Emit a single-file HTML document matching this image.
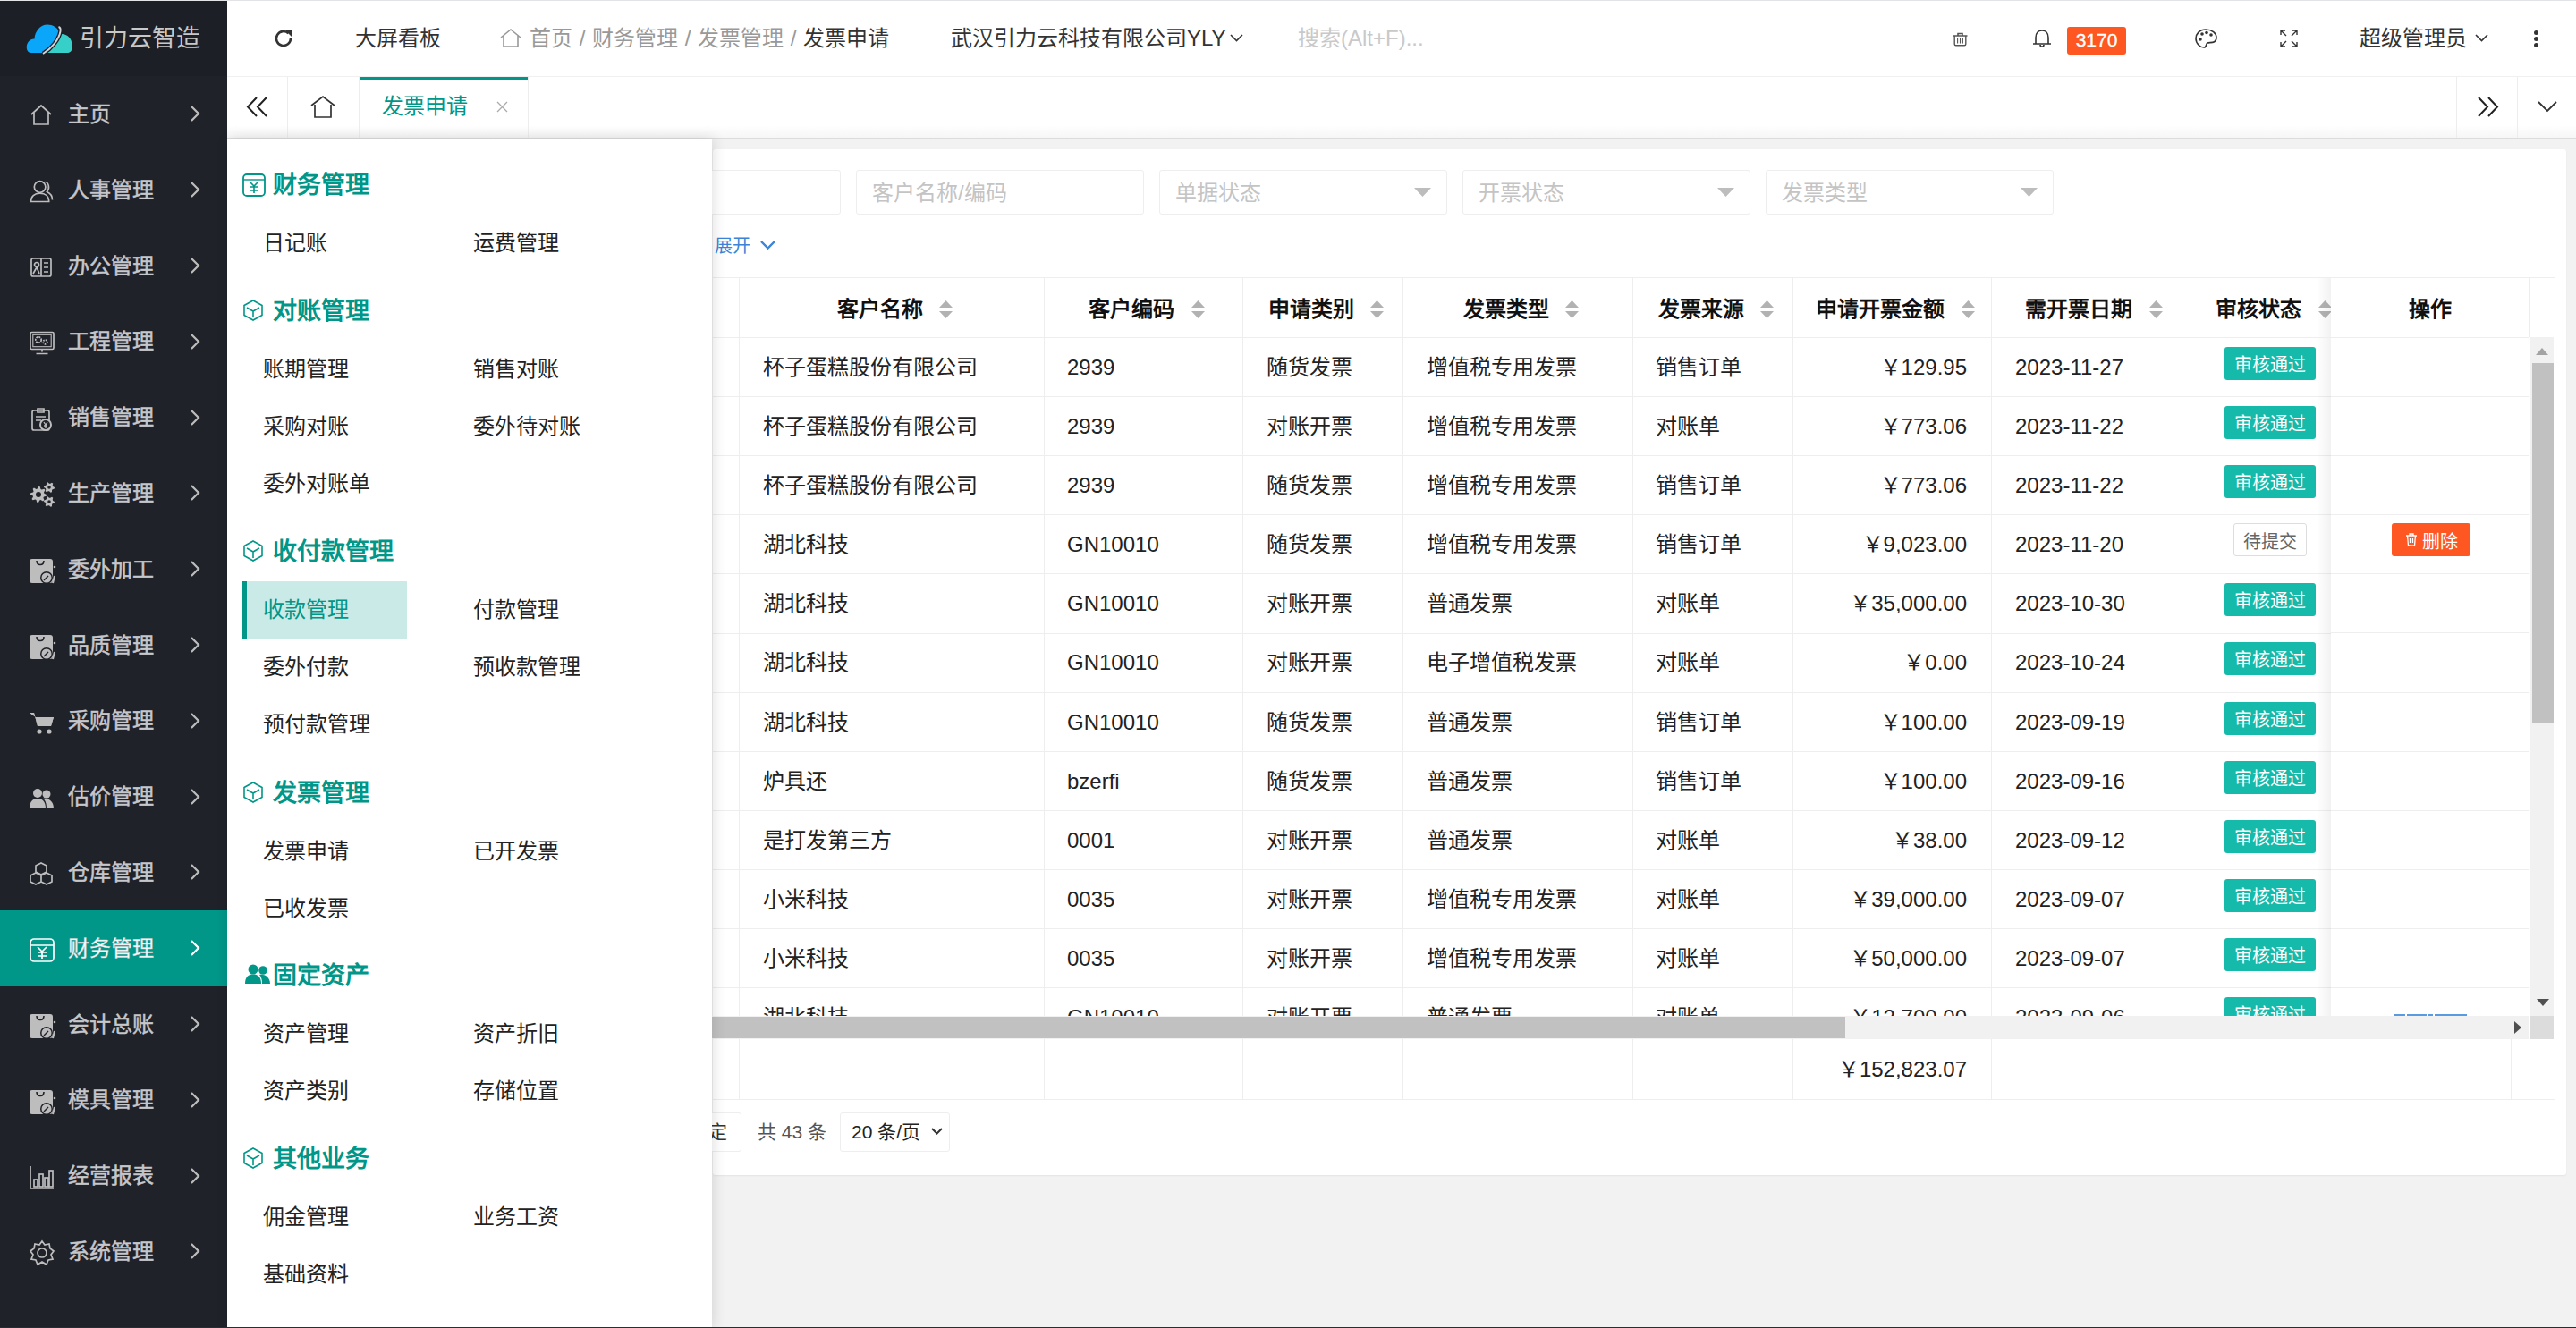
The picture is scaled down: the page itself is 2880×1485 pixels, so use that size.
<!DOCTYPE html><html lang="zh-CN"><head><meta charset="utf-8"><style>
*{margin:0;padding:0;box-sizing:border-box}
html,body{width:2880px;height:1485px;overflow:hidden;background:#f2f2f2;font-family:"Liberation Sans",sans-serif;color:#333}
.a{position:absolute}
.t{position:absolute;white-space:nowrap;line-height:1}
svg{position:absolute;overflow:visible}
#side{position:absolute;left:0;top:1px;width:254px;height:1484px;background:#20222a}
.mi{position:absolute;left:0;width:254px}
.mi .tx{position:absolute;left:76px;top:1px;font-size:24px;color:#c6c7cb;-webkit-text-stroke:0.5px #c6c7cb;white-space:nowrap}
.mi.on{background:#009688}
.mi.on .tx{color:#fff}
</style></head><body>
<div class="a" style="left:0;top:0;width:2880px;height:1px;background:#e2e3e6"></div>
<div id="side">
<div class="a" style="left:0;top:0;width:254px;height:84px;background:#1d1f26"></div>
<svg style="left:29px;top:25px" width="54" height="36" viewBox="0 0 54 36">
<path d="M6 33 C2 33 0.5 29.5 0.8 26 C1.2 21 5 17 9.5 17.5 C10 9 16 1.6 24 1.6 C30 1.6 35 5 37 9 C33 19 27 28 20 33 Z" fill="#0aa6fa"/>
<path d="M23 33 C30 28 35 20 39 12 C46 11.5 51.5 17 51.5 24 L51.5 28 C51.5 31 49 33 46 33 Z" fill="#36d0c9"/>
<path d="M19 34 C29 28 37 18 38.5 9 C39 6 38 4.5 36.5 4" stroke="#1d1f26" stroke-width="4.6" fill="none"/>
<path d="M19 34 C29 28 37 18 38.5 9 C39 6 38 4.5 36.5 4" stroke="#d3d4d8" stroke-width="1.9" fill="none"/></svg>
<div class="t" style="left:89px;top:29px;font-size:27px;color:#c8c8c8">引力云智造</div>
</div>
<div class="mi" style="top:85.0px;height:84.8px">
<div class="tx" style="line-height:84.8px">主页</div>
<svg style="left:33px;top:30.4px" width="28" height="28" viewBox="0 0 28 28"><path d="M2 13 L13 3 L24 13 M5 11 V24 H21 V11" stroke="#bdbdbd" fill="none" stroke-width="1.7"/></svg>
<svg style="left:212px;top:33.4px" width="12" height="18" viewBox="0 0 12 18"><path d="M2 1 L10 9 L2 17" stroke="#bdbdbd" stroke-width="2.2" fill="none"/></svg>
</div>
<div class="mi" style="top:169.8px;height:84.8px">
<div class="tx" style="line-height:84.8px">人事管理</div>
<svg style="left:33px;top:30.4px" width="28" height="28" viewBox="0 0 28 28"><circle cx="11.6" cy="9" r="6.3" stroke="#bdbdbd" fill="none" stroke-width="1.7"/><path d="M1.5 25.5 C1.5 19.5 5.5 16.2 11.6 16.2 C17.7 16.2 21.7 19.5 21.7 25.5 Z" stroke="#bdbdbd" fill="none" stroke-width="1.7"/><path d="M17.5 3.5 C21.5 4 23 10.5 19.5 14.5 C23 16 25.5 19.5 25.5 23.5" stroke="#bdbdbd" fill="none" stroke-width="1.7"/></svg>
<svg style="left:212px;top:33.4px" width="12" height="18" viewBox="0 0 12 18"><path d="M2 1 L10 9 L2 17" stroke="#bdbdbd" stroke-width="2.2" fill="none"/></svg>
</div>
<div class="mi" style="top:254.6px;height:84.8px">
<div class="tx" style="line-height:84.8px">办公管理</div>
<svg style="left:33px;top:30.4px" width="28" height="28" viewBox="0 0 28 28"><rect x="2" y="4" width="22" height="20" rx="2" stroke="#bdbdbd" fill="none" stroke-width="1.7"/><path d="M13 4 V24 M16 9 H21 M16 14 H21 M16 19 H21" stroke="#bdbdbd" fill="none" stroke-width="1.7"/><circle cx="8" cy="11" r="2.5" stroke="#bdbdbd" fill="none" stroke-width="1.7"/><path d="M4 21 L8 14 L11 21" stroke="#bdbdbd" fill="none" stroke-width="1.7"/></svg>
<svg style="left:212px;top:33.4px" width="12" height="18" viewBox="0 0 12 18"><path d="M2 1 L10 9 L2 17" stroke="#bdbdbd" stroke-width="2.2" fill="none"/></svg>
</div>
<div class="mi" style="top:339.4px;height:84.8px">
<div class="tx" style="line-height:84.8px">工程管理</div>
<svg style="left:33px;top:30.4px" width="28" height="28" viewBox="0 0 28 28"><rect x="1" y="1.5" width="26" height="19" rx="1.5" stroke="#bdbdbd" fill="none" stroke-width="1.7"/><rect x="3.8" y="4.3" width="20.4" height="13.4" stroke="#bdbdbd" fill="none" stroke-width="1.1"/><circle cx="10" cy="10" r="3.2" stroke="#bdbdbd" fill="none" stroke-width="1.7" stroke-dasharray="2 1"/><circle cx="17.5" cy="12.5" r="2.3" stroke="#bdbdbd" fill="none" stroke-width="1.7" stroke-dasharray="1.5 1"/><path d="M14 20.5 V23.5 M7.5 25.5 H20.5" stroke="#bdbdbd" fill="none" stroke-width="1.7"/></svg>
<svg style="left:212px;top:33.4px" width="12" height="18" viewBox="0 0 12 18"><path d="M2 1 L10 9 L2 17" stroke="#bdbdbd" stroke-width="2.2" fill="none"/></svg>
</div>
<div class="mi" style="top:424.2px;height:84.8px">
<div class="tx" style="line-height:84.8px">销售管理</div>
<svg style="left:33px;top:30.4px" width="28" height="28" viewBox="0 0 28 28"><rect x="3" y="4" width="19" height="22" rx="2" stroke="#bdbdbd" fill="none" stroke-width="1.7"/><path d="M9 2 H16 V6 H9 Z M7 11 H18 M7 15 H13" stroke="#bdbdbd" fill="none" stroke-width="1.7"/><circle cx="18" cy="20" r="6" fill="#20222a" stroke="#bdbdbd" fill="none" s stroke-width="2"/><path d="M16 17 L18 20 L20 17 M18 20 V24 M16 21 H20" stroke="#bdbdbd" fill="none" stroke-width="1.3"/></svg>
<svg style="left:212px;top:33.4px" width="12" height="18" viewBox="0 0 12 18"><path d="M2 1 L10 9 L2 17" stroke="#bdbdbd" stroke-width="2.2" fill="none"/></svg>
</div>
<div class="mi" style="top:509.0px;height:84.8px">
<div class="tx" style="line-height:84.8px">生产管理</div>
<svg style="left:33px;top:30.4px" width="28" height="28" viewBox="0 0 28 28"><path d="M19.00 14.00 L18.83 15.76 L16.01 16.49 L15.40 17.61 L16.36 20.36 L15.00 21.48 L12.49 20.01 L11.27 20.38 L10.00 23.00 L8.24 22.83 L7.51 20.01 L6.39 19.40 L3.64 20.36 L2.52 19.00 L3.99 16.49 L3.62 15.27 L1.00 14.00 L1.17 12.24 L3.99 11.51 L4.60 10.39 L3.64 7.64 L5.00 6.52 L7.51 7.99 L8.73 7.62 L10.00 5.00 L11.76 5.17 L12.49 7.99 L13.61 8.60 L16.36 7.64 L17.48 9.00 L16.01 11.51 L16.38 12.73 Z" fill="#bdbdbd"/><circle cx="10" cy="14" r="3" fill="#20222a"/><path d="M28.00 6.00 L27.80 7.55 L25.72 8.15 L25.04 9.04 L25.00 11.20 L23.55 11.80 L22.00 10.30 L20.89 10.15 L19.00 11.20 L17.76 10.24 L18.28 8.15 L17.85 7.11 L16.00 6.00 L16.20 4.45 L18.28 3.85 L18.96 2.96 L19.00 0.80 L20.45 0.20 L22.00 1.70 L23.11 1.85 L25.00 0.80 L26.24 1.76 L25.72 3.85 L26.15 4.89 Z" fill="#bdbdbd"/><circle cx="22" cy="6" r="1.8" fill="#20222a"/><path d="M28.00 22.00 L27.80 23.55 L25.72 24.15 L25.04 25.04 L25.00 27.20 L23.55 27.80 L22.00 26.30 L20.89 26.15 L19.00 27.20 L17.76 26.24 L18.28 24.15 L17.85 23.11 L16.00 22.00 L16.20 20.45 L18.28 19.85 L18.96 18.96 L19.00 16.80 L20.45 16.20 L22.00 17.70 L23.11 17.85 L25.00 16.80 L26.24 17.76 L25.72 19.85 L26.15 20.89 Z" fill="#bdbdbd"/><circle cx="22" cy="22" r="1.8" fill="#20222a"/></svg>
<svg style="left:212px;top:33.4px" width="12" height="18" viewBox="0 0 12 18"><path d="M2 1 L10 9 L2 17" stroke="#bdbdbd" stroke-width="2.2" fill="none"/></svg>
</div>
<div class="mi" style="top:593.8px;height:84.8px">
<div class="tx" style="line-height:84.8px">委外加工</div>
<svg style="left:33px;top:30.4px" width="28" height="28" viewBox="0 0 28 28"><rect x="0" y="1" width="26" height="27" rx="3" fill="#bdbdbd"/><path d="M8 3 C8 9 16 9 16 3" stroke="#20222a" stroke-width="1.6" fill="none"/><circle cx="19" cy="22" r="7" fill="#20222a"/><circle cx="19" cy="22" r="5.5" fill="#bdbdbd"/><path d="M16 25 L21 20" stroke="#20222a" stroke-width="1.5"/><circle cx="28" cy="10" r="1.3" fill="#bdbdbd"/><path d="M28 20 L26 28" stroke="#bdbdbd" stroke-width="2"/></svg>
<svg style="left:212px;top:33.4px" width="12" height="18" viewBox="0 0 12 18"><path d="M2 1 L10 9 L2 17" stroke="#bdbdbd" stroke-width="2.2" fill="none"/></svg>
</div>
<div class="mi" style="top:678.6px;height:84.8px">
<div class="tx" style="line-height:84.8px">品质管理</div>
<svg style="left:33px;top:30.4px" width="28" height="28" viewBox="0 0 28 28"><rect x="0" y="1" width="26" height="27" rx="3" fill="#bdbdbd"/><path d="M8 3 C8 9 16 9 16 3" stroke="#20222a" stroke-width="1.6" fill="none"/><circle cx="19" cy="22" r="7" fill="#20222a"/><circle cx="19" cy="22" r="5.5" fill="#bdbdbd"/><path d="M16 25 L21 20" stroke="#20222a" stroke-width="1.5"/><circle cx="28" cy="10" r="1.3" fill="#bdbdbd"/><path d="M28 20 L26 28" stroke="#bdbdbd" stroke-width="2"/></svg>
<svg style="left:212px;top:33.4px" width="12" height="18" viewBox="0 0 12 18"><path d="M2 1 L10 9 L2 17" stroke="#bdbdbd" stroke-width="2.2" fill="none"/></svg>
</div>
<div class="mi" style="top:763.4px;height:84.8px">
<div class="tx" style="line-height:84.8px">采购管理</div>
<svg style="left:33px;top:30.4px" width="28" height="28" viewBox="0 0 28 28"><path d="M0 3 H5 L9 18 H24 L27 8 H7" fill="#bdbdbd"/><path d="M0 3 H5 L9 18 H24 L27 8 H7 Z" fill="#bdbdbd"/><circle cx="11" cy="24" r="2.6" fill="#bdbdbd"/><circle cx="22" cy="24" r="2.6" fill="#bdbdbd"/></svg>
<svg style="left:212px;top:33.4px" width="12" height="18" viewBox="0 0 12 18"><path d="M2 1 L10 9 L2 17" stroke="#bdbdbd" stroke-width="2.2" fill="none"/></svg>
</div>
<div class="mi" style="top:848.2px;height:84.8px">
<div class="tx" style="line-height:84.8px">估价管理</div>
<svg style="left:33px;top:30.4px" width="28" height="28" viewBox="0 0 28 28"><circle cx="9" cy="8" r="5" fill="#bdbdbd"/><path d="M0 25 C0 17 4 14 9 14 C14 14 18 17 18 25 Z" fill="#bdbdbd"/><circle cx="19" cy="9" r="4.5" fill="#bdbdbd"/><path d="M15 14 C20 13 27 16 27 25 H19 C19 20 18 16 15 14 Z" fill="#bdbdbd"/></svg>
<svg style="left:212px;top:33.4px" width="12" height="18" viewBox="0 0 12 18"><path d="M2 1 L10 9 L2 17" stroke="#bdbdbd" stroke-width="2.2" fill="none"/></svg>
</div>
<div class="mi" style="top:933.0px;height:84.8px">
<div class="tx" style="line-height:84.8px">仓库管理</div>
<svg style="left:33px;top:30.4px" width="28" height="28" viewBox="0 0 28 28"><path d="M13 2 L19 5 V12 L13 15 L7 12 V5 Z M7 13 L13 16 V23 L7 26 L1 23 V16 Z M19 13 L25 16 V23 L19 26 L13 23 V16 Z" stroke="#bdbdbd" fill="none" stroke-width="1.7" stroke-width="1.8"/></svg>
<svg style="left:212px;top:33.4px" width="12" height="18" viewBox="0 0 12 18"><path d="M2 1 L10 9 L2 17" stroke="#bdbdbd" stroke-width="2.2" fill="none"/></svg>
</div>
<div class="mi on" style="top:1017.8px;height:84.8px">
<div class="tx" style="line-height:84.8px">财务管理</div>
<svg style="left:33px;top:30.4px" width="28" height="28" viewBox="0 0 28 28"><rect x="1" y="2" width="26" height="25" rx="4" stroke="#ffffff" fill="none" stroke-width="1.7"/><path d="M1 9 H27" stroke="#ffffff" stroke-width="1.5"/><path d="M9 11 L14 16 L19 11 M14 16 V24 M9 17 H19 M9 21 H19" stroke="#ffffff" fill="none" stroke-width="1.7" stroke-width="1.8"/></svg>
<svg style="left:212px;top:33.4px" width="12" height="18" viewBox="0 0 12 18"><path d="M2 1 L10 9 L2 17" stroke="#ffffff" stroke-width="2.2" fill="none"/></svg>
</div>
<div class="mi" style="top:1102.6px;height:84.8px">
<div class="tx" style="line-height:84.8px">会计总账</div>
<svg style="left:33px;top:30.4px" width="28" height="28" viewBox="0 0 28 28"><rect x="0" y="1" width="26" height="27" rx="3" fill="#bdbdbd"/><path d="M8 3 C8 9 16 9 16 3" stroke="#20222a" stroke-width="1.6" fill="none"/><circle cx="19" cy="22" r="7" fill="#20222a"/><circle cx="19" cy="22" r="5.5" fill="#bdbdbd"/><path d="M16 25 L21 20" stroke="#20222a" stroke-width="1.5"/><circle cx="28" cy="10" r="1.3" fill="#bdbdbd"/><path d="M28 20 L26 28" stroke="#bdbdbd" stroke-width="2"/></svg>
<svg style="left:212px;top:33.4px" width="12" height="18" viewBox="0 0 12 18"><path d="M2 1 L10 9 L2 17" stroke="#bdbdbd" stroke-width="2.2" fill="none"/></svg>
</div>
<div class="mi" style="top:1187.4px;height:84.8px">
<div class="tx" style="line-height:84.8px">模具管理</div>
<svg style="left:33px;top:30.4px" width="28" height="28" viewBox="0 0 28 28"><rect x="0" y="1" width="26" height="27" rx="3" fill="#bdbdbd"/><path d="M8 3 C8 9 16 9 16 3" stroke="#20222a" stroke-width="1.6" fill="none"/><circle cx="19" cy="22" r="7" fill="#20222a"/><circle cx="19" cy="22" r="5.5" fill="#bdbdbd"/><path d="M16 25 L21 20" stroke="#20222a" stroke-width="1.5"/><circle cx="28" cy="10" r="1.3" fill="#bdbdbd"/><path d="M28 20 L26 28" stroke="#bdbdbd" stroke-width="2"/></svg>
<svg style="left:212px;top:33.4px" width="12" height="18" viewBox="0 0 12 18"><path d="M2 1 L10 9 L2 17" stroke="#bdbdbd" stroke-width="2.2" fill="none"/></svg>
</div>
<div class="mi" style="top:1272.2px;height:84.8px">
<div class="tx" style="line-height:84.8px">经营报表</div>
<svg style="left:33px;top:30.4px" width="28" height="28" viewBox="0 0 28 28"><path d="M1 1 V26 H27" stroke="#bdbdbd" fill="none" stroke-width="1.7"/><rect x="5" y="16" width="4" height="8" stroke="#bdbdbd" fill="none" stroke-width="1.7" stroke-width="1.5"/><rect x="11" y="10" width="4" height="14" stroke="#bdbdbd" fill="none" stroke-width="1.7" stroke-width="1.5"/><rect x="17" y="14" width="4" height="10" stroke="#bdbdbd" fill="none" stroke-width="1.7" stroke-width="1.5"/><rect x="22" y="6" width="4" height="18" stroke="#bdbdbd" fill="none" stroke-width="1.7" stroke-width="1.5"/></svg>
<svg style="left:212px;top:33.4px" width="12" height="18" viewBox="0 0 12 18"><path d="M2 1 L10 9 L2 17" stroke="#bdbdbd" stroke-width="2.2" fill="none"/></svg>
</div>
<div class="mi" style="top:1357.0px;height:84.8px">
<div class="tx" style="line-height:84.8px">系统管理</div>
<svg style="left:33px;top:30.4px" width="28" height="28" viewBox="0 0 28 28"><circle cx="14" cy="14" r="5" stroke="#bdbdbd" fill="none" stroke-width="1.7"/><path d="M14 1 L17 5 L22 4 L23 9 L27 12 L24 16 L26 21 L21 22 L19 27 L14 24 L9 27 L7 22 L2 21 L4 16 L1 12 L5 9 L6 4 L11 5 Z" stroke="#bdbdbd" fill="none" stroke-width="1.7" stroke-width="1.8"/></svg>
<svg style="left:212px;top:33.4px" width="12" height="18" viewBox="0 0 12 18"><path d="M2 1 L10 9 L2 17" stroke="#bdbdbd" stroke-width="2.2" fill="none"/></svg>
</div>
<div class="a" style="left:254px;top:1px;width:2626px;height:85px;background:#fff;border-bottom:1px solid #f0f0f0"></div>
<svg style="left:306px;top:32px" width="22" height="22" viewBox="0 0 22 22"><path d="M19 11 A8 8 0 1 1 16.5 5.2" stroke="#333" stroke-width="2.6" fill="none"/><path d="M13 2 L20 2 L20 9 Z" fill="#333"/></svg>
<div class="t" style="left:397px;top:31px;font-size:24px;color:#333">大屏看板</div>
<svg style="left:559px;top:31px" width="24" height="22" viewBox="0 0 24 22"><path d="M1 11 L12 2 L23 11 M4 9 V21 H20 V9" stroke="#999" stroke-width="1.6" fill="none"/></svg>
<div class="t" style="left:592px;top:31px;font-size:24px;color:#999">首页<span style="margin:0 1px"> / </span>财务管理<span style="margin:0 1px"> / </span>发票管理<span style="margin:0 1px"> / </span><span style="color:#333">发票申请</span></div>
<div class="t" style="left:1063px;top:31px;font-size:24px;color:#333">武汉引力云科技有限公司YLY</div>
<svg style="left:1375px;top:38px" width="15" height="9" viewBox="0 0 15 9"><path d="M1 1 L7.5 7.5 L14 1" stroke="#333" stroke-width="1.6" fill="none"/></svg>
<div class="t" style="left:1451px;top:31px;font-size:24px;color:#c9c9c9">搜索(Alt+F)...</div>
<svg style="left:2182px;top:34px" width="19" height="18" viewBox="0 0 19 18"><path d="M1.5 6 H17.5 M7 6 V3.5 H12 V6" stroke="#555" stroke-width="1.6" fill="none"/><path d="M3.2 6 V15.3 C3.2 16.3 3.7 16.8 4.7 16.8 H14.3 C15.3 16.8 15.8 16.3 15.8 15.3 V6" stroke="#555" stroke-width="1.4" fill="none"/><path d="M6.6 8.5 V14.5 M9.5 8.5 V14.5 M12.4 8.5 V14.5" stroke="#555" stroke-width="1.1" fill="none"/></svg>
<svg style="left:2272px;top:32px" width="22" height="22" viewBox="0 0 22 22"><path d="M4 17 V10 C4 5 7 2 11 2 C15 2 18 5 18 10 V17 H21 H1 Z M9 18 C9 21 13 21 13 18" stroke="#333" stroke-width="1.6" fill="none"/></svg>
<div class="a" style="left:2311px;top:30px;width:66px;height:31px;background:#ff5722;border-radius:3px"></div>
<div class="t" style="left:2311px;top:34px;width:66px;text-align:center;font-size:21px;color:#fff;-webkit-text-stroke:0.3px #fff">3170</div>
<svg style="left:2454px;top:32px" width="25" height="22" viewBox="0 0 25 22"><path d="M12 1 C5 1 1 6 1 11 C1 17 6 21 10 21 C13 21 12 17 14 16 C17 15 24 17 24 10 C24 5 19 1 12 1 Z" stroke="#333" stroke-width="1.6" fill="none"/><circle cx="6" cy="12" r="1.8" fill="#333"/><circle cx="8" cy="6" r="1.8" fill="#333"/><circle cx="13" cy="4.5" r="1.8" fill="#333"/><circle cx="18" cy="7" r="1.8" fill="#333"/></svg>
<svg style="left:2549px;top:33px" width="20" height="20" viewBox="0 0 20 20"><path d="M1 6 V1 H6 M1 1 L7 7 M14 1 H19 V6 M19 1 L13 7 M1 14 V19 H6 M1 19 L7 13 M19 14 V19 H14 M19 19 L13 13" stroke="#333" stroke-width="1.4" fill="none"/></svg>
<div class="t" style="left:2638px;top:31px;font-size:24px;color:#333">超级管理员</div>
<svg style="left:2767px;top:38px" width="15" height="9" viewBox="0 0 15 9"><path d="M1 1 L7.5 7.5 L14 1" stroke="#333" stroke-width="1.6" fill="none"/></svg>
<div class="a" style="left:2833px;top:34px;width:5px;height:5px;border-radius:50%;background:#333"></div><div class="a" style="left:2833px;top:41px;width:5px;height:5px;border-radius:50%;background:#333"></div><div class="a" style="left:2833px;top:48px;width:5px;height:5px;border-radius:50%;background:#333"></div>
<div class="a" style="left:254px;top:86px;width:2626px;height:69px;background:linear-gradient(#fff 0,#fff 54px,#f6f6f6 68px);border-bottom:1px solid #dcdcdc"></div>
<div class="a" style="left:321px;top:86px;width:1px;height:68px;background:#ededed"></div>
<div class="a" style="left:401px;top:86px;width:1px;height:68px;background:#ededed"></div>
<div class="a" style="left:590px;top:86px;width:1px;height:68px;background:#ededed"></div>
<svg style="left:276px;top:108px" width="23" height="23" viewBox="0 0 23 23"><path d="M11 1 L1 11.5 L11 22 M22 1 L12 11.5 L22 22" stroke="#222" stroke-width="2" fill="none"/></svg>
<svg style="left:347px;top:107px" width="28" height="25" viewBox="0 0 28 25"><path d="M1 11 L14 1 L27 11 M5 10 V24 H23 V10" stroke="#333" stroke-width="1.7" fill="none"/></svg>
<div class="a" style="left:402px;top:86px;width:188px;height:3px;background:#009688"></div>
<div class="t" style="left:427px;top:107px;font-size:24px;color:#009688">发票申请</div>
<svg style="left:555px;top:113px" width="13" height="13" viewBox="0 0 13 13"><path d="M1 1 L12 12 M12 1 L1 12" stroke="#aaa" stroke-width="1.3" fill="none"/></svg>
<div class="a" style="left:2746px;top:86px;width:1px;height:68px;background:#ededed"></div>
<div class="a" style="left:2814px;top:86px;width:1px;height:68px;background:#ededed"></div>
<svg style="left:2770px;top:108px" width="23" height="23" viewBox="0 0 23 23"><path d="M1 1 L11 11.5 L1 22 M12 1 L22 11.5 L12 22" stroke="#222" stroke-width="2" fill="none"/></svg>
<svg style="left:2837px;top:113px" width="22" height="13" viewBox="0 0 22 13"><path d="M1 1 L11 11 L21 1" stroke="#333" stroke-width="1.8" fill="none"/></svg>
<div class="a" style="left:797px;top:167px;width:2072px;height:1147px;background:#fff;border-radius:3px;box-shadow:0 1px 2px rgba(0,0,0,0.06)"></div>
<div class="a" style="left:618px;top:190px;width:322px;height:50px;border:1px solid #eee;border-radius:3px;background:#fff"></div>
<div class="a" style="left:957px;top:190px;width:322px;height:50px;border:1px solid #eee;border-radius:3px;background:#fff"></div>
<div class="t" style="left:975px;top:204px;font-size:24px;color:#c4c4c4">客户名称/编码</div>
<div class="a" style="left:1296px;top:190px;width:322px;height:50px;border:1px solid #eee;border-radius:3px;background:#fff"></div>
<div class="t" style="left:1314px;top:204px;font-size:24px;color:#c4c4c4">单据状态</div>
<svg style="left:1581px;top:210px" width="19" height="10" viewBox="0 0 19 10"><path d="M0 0 H19 L9.5 10 Z" fill="#bdbdbd"/></svg>
<div class="a" style="left:1635px;top:190px;width:322px;height:50px;border:1px solid #eee;border-radius:3px;background:#fff"></div>
<div class="t" style="left:1653px;top:204px;font-size:24px;color:#c4c4c4">开票状态</div>
<svg style="left:1920px;top:210px" width="19" height="10" viewBox="0 0 19 10"><path d="M0 0 H19 L9.5 10 Z" fill="#bdbdbd"/></svg>
<div class="a" style="left:1974px;top:190px;width:322px;height:50px;border:1px solid #eee;border-radius:3px;background:#fff"></div>
<div class="t" style="left:1992px;top:204px;font-size:24px;color:#c4c4c4">发票类型</div>
<svg style="left:2259px;top:210px" width="19" height="10" viewBox="0 0 19 10"><path d="M0 0 H19 L9.5 10 Z" fill="#bdbdbd"/></svg>
<div class="t" style="left:799px;top:265px;font-size:20px;color:#3b84d8">展开</div>
<svg style="left:850px;top:269px" width="17" height="10" viewBox="0 0 17 10"><path d="M1 1 L8.5 8.5 L16 1" stroke="#3b84d8" stroke-width="2.4" fill="none"/></svg>
<div class="a" style="left:600px;top:310px;width:2257px;height:1px;background:#eeeeee"></div>
<div class="a" style="left:2856px;top:310px;width:1px;height:991px;background:#eeeeee"></div>
<div class="a" style="left:600px;top:1300px;width:2257px;height:1px;background:#eeeeee"></div>
<div class="a" style="left:826px;top:310px;width:1px;height:826px;background:#eeeeee"></div>
<div class="a" style="left:1167px;top:310px;width:1px;height:826px;background:#eeeeee"></div>
<div class="a" style="left:1389px;top:310px;width:1px;height:826px;background:#eeeeee"></div>
<div class="a" style="left:1568px;top:310px;width:1px;height:826px;background:#eeeeee"></div>
<div class="a" style="left:1825px;top:310px;width:1px;height:826px;background:#eeeeee"></div>
<div class="a" style="left:2004px;top:310px;width:1px;height:826px;background:#eeeeee"></div>
<div class="a" style="left:2226px;top:310px;width:1px;height:826px;background:#eeeeee"></div>
<div class="a" style="left:2448px;top:310px;width:1px;height:826px;background:#eeeeee"></div>
<div class="a" style="left:600px;top:377px;width:2228px;height:1px;background:#eeeeee"></div>
<div class="a" style="left:600px;top:443px;width:2228px;height:1px;background:#eeeeee"></div>
<div class="a" style="left:600px;top:509px;width:2228px;height:1px;background:#eeeeee"></div>
<div class="a" style="left:600px;top:575px;width:2228px;height:1px;background:#eeeeee"></div>
<div class="a" style="left:600px;top:641px;width:2228px;height:1px;background:#eeeeee"></div>
<div class="a" style="left:600px;top:708px;width:2228px;height:1px;background:#eeeeee"></div>
<div class="a" style="left:600px;top:774px;width:2228px;height:1px;background:#eeeeee"></div>
<div class="a" style="left:600px;top:840px;width:2228px;height:1px;background:#eeeeee"></div>
<div class="a" style="left:600px;top:906px;width:2228px;height:1px;background:#eeeeee"></div>
<div class="a" style="left:600px;top:972px;width:2228px;height:1px;background:#eeeeee"></div>
<div class="a" style="left:600px;top:1038px;width:2228px;height:1px;background:#eeeeee"></div>
<div class="a" style="left:600px;top:1104px;width:2228px;height:1px;background:#eeeeee"></div>
<div class="t" style="left:936px;top:334px;font-size:24px;font-weight:bold;color:#111">客户名称</div>
<svg style="left:1050px;top:336px" width="15" height="20" viewBox="0 0 15 20"><path d="M0 8 L7.5 0 L15 8 Z M0 12 L7.5 20 L15 12 Z" fill="#b2b2b2"/></svg>
<div class="t" style="left:1217px;top:334px;font-size:24px;font-weight:bold;color:#111">客户编码</div>
<svg style="left:1332px;top:336px" width="15" height="20" viewBox="0 0 15 20"><path d="M0 8 L7.5 0 L15 8 Z M0 12 L7.5 20 L15 12 Z" fill="#b2b2b2"/></svg>
<div class="t" style="left:1418px;top:334px;font-size:24px;font-weight:bold;color:#111">申请类别</div>
<svg style="left:1532px;top:336px" width="15" height="20" viewBox="0 0 15 20"><path d="M0 8 L7.5 0 L15 8 Z M0 12 L7.5 20 L15 12 Z" fill="#b2b2b2"/></svg>
<div class="t" style="left:1636px;top:334px;font-size:24px;font-weight:bold;color:#111">发票类型</div>
<svg style="left:1750px;top:336px" width="15" height="20" viewBox="0 0 15 20"><path d="M0 8 L7.5 0 L15 8 Z M0 12 L7.5 20 L15 12 Z" fill="#b2b2b2"/></svg>
<div class="t" style="left:1854px;top:334px;font-size:24px;font-weight:bold;color:#111">发票来源</div>
<svg style="left:1968px;top:336px" width="15" height="20" viewBox="0 0 15 20"><path d="M0 8 L7.5 0 L15 8 Z M0 12 L7.5 20 L15 12 Z" fill="#b2b2b2"/></svg>
<div class="t" style="left:2030px;top:334px;font-size:24px;font-weight:bold;color:#111">申请开票金额</div>
<svg style="left:2193px;top:336px" width="15" height="20" viewBox="0 0 15 20"><path d="M0 8 L7.5 0 L15 8 Z M0 12 L7.5 20 L15 12 Z" fill="#b2b2b2"/></svg>
<div class="t" style="left:2264px;top:334px;font-size:24px;font-weight:bold;color:#111">需开票日期</div>
<svg style="left:2403px;top:336px" width="15" height="20" viewBox="0 0 15 20"><path d="M0 8 L7.5 0 L15 8 Z M0 12 L7.5 20 L15 12 Z" fill="#b2b2b2"/></svg>
<div class="t" style="left:2477px;top:334px;font-size:24px;font-weight:bold;color:#111">审核状态</div>
<svg style="left:2592px;top:336px" width="15" height="20" viewBox="0 0 15 20"><path d="M0 8 L7.5 0 L15 8 Z M0 12 L7.5 20 L15 12 Z" fill="#b2b2b2"/></svg>
<div class="a" style="left:0;top:378px;width:2880px;height:758px;overflow:hidden">
<div class="t" style="left:853px;top:21px;font-size:24px;color:#222">杯子蛋糕股份有限公司</div>
<div class="t" style="left:1193px;top:21px;font-size:24px;color:#222">2939</div>
<div class="t" style="left:1416px;top:21px;font-size:24px;color:#222">随货发票</div>
<div class="t" style="left:1595px;top:21px;font-size:24px;color:#222">增值税专用发票</div>
<div class="t" style="left:1851px;top:21px;font-size:24px;color:#222">销售订单</div>
<div class="t" style="left:1900px;width:299px;text-align:right;top:21px;font-size:24px;color:#222">￥129.95</div>
<div class="t" style="left:2253px;top:21px;font-size:24px;color:#222">2023-11-27</div>
<div class="a" style="left:2487px;top:10px;width:102px;height:37px;background:#16baaa;border-radius:3px"></div>
<div class="t" style="left:2498px;top:20px;font-size:20px;color:#fff">审核通过</div>
<div class="t" style="left:853px;top:87px;font-size:24px;color:#222">杯子蛋糕股份有限公司</div>
<div class="t" style="left:1193px;top:87px;font-size:24px;color:#222">2939</div>
<div class="t" style="left:1416px;top:87px;font-size:24px;color:#222">对账开票</div>
<div class="t" style="left:1595px;top:87px;font-size:24px;color:#222">增值税专用发票</div>
<div class="t" style="left:1851px;top:87px;font-size:24px;color:#222">对账单</div>
<div class="t" style="left:1900px;width:299px;text-align:right;top:87px;font-size:24px;color:#222">￥773.06</div>
<div class="t" style="left:2253px;top:87px;font-size:24px;color:#222">2023-11-22</div>
<div class="a" style="left:2487px;top:76px;width:102px;height:37px;background:#16baaa;border-radius:3px"></div>
<div class="t" style="left:2498px;top:86px;font-size:20px;color:#fff">审核通过</div>
<div class="t" style="left:853px;top:153px;font-size:24px;color:#222">杯子蛋糕股份有限公司</div>
<div class="t" style="left:1193px;top:153px;font-size:24px;color:#222">2939</div>
<div class="t" style="left:1416px;top:153px;font-size:24px;color:#222">随货发票</div>
<div class="t" style="left:1595px;top:153px;font-size:24px;color:#222">增值税专用发票</div>
<div class="t" style="left:1851px;top:153px;font-size:24px;color:#222">销售订单</div>
<div class="t" style="left:1900px;width:299px;text-align:right;top:153px;font-size:24px;color:#222">￥773.06</div>
<div class="t" style="left:2253px;top:153px;font-size:24px;color:#222">2023-11-22</div>
<div class="a" style="left:2487px;top:142px;width:102px;height:37px;background:#16baaa;border-radius:3px"></div>
<div class="t" style="left:2498px;top:152px;font-size:20px;color:#fff">审核通过</div>
<div class="t" style="left:853px;top:219px;font-size:24px;color:#222">湖北科技</div>
<div class="t" style="left:1193px;top:219px;font-size:24px;color:#222">GN10010</div>
<div class="t" style="left:1416px;top:219px;font-size:24px;color:#222">随货发票</div>
<div class="t" style="left:1595px;top:219px;font-size:24px;color:#222">增值税专用发票</div>
<div class="t" style="left:1851px;top:219px;font-size:24px;color:#222">销售订单</div>
<div class="t" style="left:1900px;width:299px;text-align:right;top:219px;font-size:24px;color:#222">￥9,023.00</div>
<div class="t" style="left:2253px;top:219px;font-size:24px;color:#222">2023-11-20</div>
<div class="a" style="left:2497px;top:207px;width:82px;height:37px;background:#fff;border:1px solid #ddd;border-radius:3px"></div>
<div class="t" style="left:2508px;top:218px;font-size:20px;color:#666">待提交</div>
<div class="t" style="left:853px;top:285px;font-size:24px;color:#222">湖北科技</div>
<div class="t" style="left:1193px;top:285px;font-size:24px;color:#222">GN10010</div>
<div class="t" style="left:1416px;top:285px;font-size:24px;color:#222">对账开票</div>
<div class="t" style="left:1595px;top:285px;font-size:24px;color:#222">普通发票</div>
<div class="t" style="left:1851px;top:285px;font-size:24px;color:#222">对账单</div>
<div class="t" style="left:1900px;width:299px;text-align:right;top:285px;font-size:24px;color:#222">￥35,000.00</div>
<div class="t" style="left:2253px;top:285px;font-size:24px;color:#222">2023-10-30</div>
<div class="a" style="left:2487px;top:274px;width:102px;height:37px;background:#16baaa;border-radius:3px"></div>
<div class="t" style="left:2498px;top:284px;font-size:20px;color:#fff">审核通过</div>
<div class="t" style="left:853px;top:351px;font-size:24px;color:#222">湖北科技</div>
<div class="t" style="left:1193px;top:351px;font-size:24px;color:#222">GN10010</div>
<div class="t" style="left:1416px;top:351px;font-size:24px;color:#222">对账开票</div>
<div class="t" style="left:1595px;top:351px;font-size:24px;color:#222">电子增值税发票</div>
<div class="t" style="left:1851px;top:351px;font-size:24px;color:#222">对账单</div>
<div class="t" style="left:1900px;width:299px;text-align:right;top:351px;font-size:24px;color:#222">￥0.00</div>
<div class="t" style="left:2253px;top:351px;font-size:24px;color:#222">2023-10-24</div>
<div class="a" style="left:2487px;top:340px;width:102px;height:37px;background:#16baaa;border-radius:3px"></div>
<div class="t" style="left:2498px;top:350px;font-size:20px;color:#fff">审核通过</div>
<div class="t" style="left:853px;top:418px;font-size:24px;color:#222">湖北科技</div>
<div class="t" style="left:1193px;top:418px;font-size:24px;color:#222">GN10010</div>
<div class="t" style="left:1416px;top:418px;font-size:24px;color:#222">随货发票</div>
<div class="t" style="left:1595px;top:418px;font-size:24px;color:#222">普通发票</div>
<div class="t" style="left:1851px;top:418px;font-size:24px;color:#222">销售订单</div>
<div class="t" style="left:1900px;width:299px;text-align:right;top:418px;font-size:24px;color:#222">￥100.00</div>
<div class="t" style="left:2253px;top:418px;font-size:24px;color:#222">2023-09-19</div>
<div class="a" style="left:2487px;top:407px;width:102px;height:37px;background:#16baaa;border-radius:3px"></div>
<div class="t" style="left:2498px;top:417px;font-size:20px;color:#fff">审核通过</div>
<div class="t" style="left:853px;top:484px;font-size:24px;color:#222">炉具还</div>
<div class="t" style="left:1193px;top:484px;font-size:24px;color:#222">bzerfi</div>
<div class="t" style="left:1416px;top:484px;font-size:24px;color:#222">随货发票</div>
<div class="t" style="left:1595px;top:484px;font-size:24px;color:#222">普通发票</div>
<div class="t" style="left:1851px;top:484px;font-size:24px;color:#222">销售订单</div>
<div class="t" style="left:1900px;width:299px;text-align:right;top:484px;font-size:24px;color:#222">￥100.00</div>
<div class="t" style="left:2253px;top:484px;font-size:24px;color:#222">2023-09-16</div>
<div class="a" style="left:2487px;top:473px;width:102px;height:37px;background:#16baaa;border-radius:3px"></div>
<div class="t" style="left:2498px;top:483px;font-size:20px;color:#fff">审核通过</div>
<div class="t" style="left:853px;top:550px;font-size:24px;color:#222">是打发第三方</div>
<div class="t" style="left:1193px;top:550px;font-size:24px;color:#222">0001</div>
<div class="t" style="left:1416px;top:550px;font-size:24px;color:#222">对账开票</div>
<div class="t" style="left:1595px;top:550px;font-size:24px;color:#222">普通发票</div>
<div class="t" style="left:1851px;top:550px;font-size:24px;color:#222">对账单</div>
<div class="t" style="left:1900px;width:299px;text-align:right;top:550px;font-size:24px;color:#222">￥38.00</div>
<div class="t" style="left:2253px;top:550px;font-size:24px;color:#222">2023-09-12</div>
<div class="a" style="left:2487px;top:539px;width:102px;height:37px;background:#16baaa;border-radius:3px"></div>
<div class="t" style="left:2498px;top:549px;font-size:20px;color:#fff">审核通过</div>
<div class="t" style="left:853px;top:616px;font-size:24px;color:#222">小米科技</div>
<div class="t" style="left:1193px;top:616px;font-size:24px;color:#222">0035</div>
<div class="t" style="left:1416px;top:616px;font-size:24px;color:#222">对账开票</div>
<div class="t" style="left:1595px;top:616px;font-size:24px;color:#222">增值税专用发票</div>
<div class="t" style="left:1851px;top:616px;font-size:24px;color:#222">对账单</div>
<div class="t" style="left:1900px;width:299px;text-align:right;top:616px;font-size:24px;color:#222">￥39,000.00</div>
<div class="t" style="left:2253px;top:616px;font-size:24px;color:#222">2023-09-07</div>
<div class="a" style="left:2487px;top:605px;width:102px;height:37px;background:#16baaa;border-radius:3px"></div>
<div class="t" style="left:2498px;top:615px;font-size:20px;color:#fff">审核通过</div>
<div class="t" style="left:853px;top:682px;font-size:24px;color:#222">小米科技</div>
<div class="t" style="left:1193px;top:682px;font-size:24px;color:#222">0035</div>
<div class="t" style="left:1416px;top:682px;font-size:24px;color:#222">对账开票</div>
<div class="t" style="left:1595px;top:682px;font-size:24px;color:#222">增值税专用发票</div>
<div class="t" style="left:1851px;top:682px;font-size:24px;color:#222">对账单</div>
<div class="t" style="left:1900px;width:299px;text-align:right;top:682px;font-size:24px;color:#222">￥50,000.00</div>
<div class="t" style="left:2253px;top:682px;font-size:24px;color:#222">2023-09-07</div>
<div class="a" style="left:2487px;top:671px;width:102px;height:37px;background:#16baaa;border-radius:3px"></div>
<div class="t" style="left:2498px;top:681px;font-size:20px;color:#fff">审核通过</div>
<div class="t" style="left:853px;top:748px;font-size:24px;color:#222">湖北科技</div>
<div class="t" style="left:1193px;top:748px;font-size:24px;color:#222">GN10010</div>
<div class="t" style="left:1416px;top:748px;font-size:24px;color:#222">对账开票</div>
<div class="t" style="left:1595px;top:748px;font-size:24px;color:#222">普通发票</div>
<div class="t" style="left:1851px;top:748px;font-size:24px;color:#222">对账单</div>
<div class="t" style="left:1900px;width:299px;text-align:right;top:748px;font-size:24px;color:#222">￥12,700.00</div>
<div class="t" style="left:2253px;top:748px;font-size:24px;color:#222">2023-09-06</div>
<div class="a" style="left:2487px;top:737px;width:102px;height:37px;background:#16baaa;border-radius:3px"></div>
<div class="t" style="left:2498px;top:747px;font-size:20px;color:#fff">审核通过</div>
<div class="a" style="left:2590px;top:0;width:16px;height:800px;background:linear-gradient(90deg,rgba(0,0,0,0),rgba(0,0,0,0.05))"></div>
<div class="a" style="left:2606px;top:0;width:222px;height:800px;background:#fff"></div>
<div class="a" style="left:2606px;top:65px;width:222px;height:1px;background:#eeeeee"></div>
<div class="a" style="left:2606px;top:131px;width:222px;height:1px;background:#eeeeee"></div>
<div class="a" style="left:2606px;top:197px;width:222px;height:1px;background:#eeeeee"></div>
<div class="a" style="left:2606px;top:263px;width:222px;height:1px;background:#eeeeee"></div>
<div class="a" style="left:2606px;top:329px;width:222px;height:1px;background:#eeeeee"></div>
<div class="a" style="left:2606px;top:396px;width:222px;height:1px;background:#eeeeee"></div>
<div class="a" style="left:2606px;top:462px;width:222px;height:1px;background:#eeeeee"></div>
<div class="a" style="left:2606px;top:528px;width:222px;height:1px;background:#eeeeee"></div>
<div class="a" style="left:2606px;top:594px;width:222px;height:1px;background:#eeeeee"></div>
<div class="a" style="left:2606px;top:660px;width:222px;height:1px;background:#eeeeee"></div>
<div class="a" style="left:2606px;top:726px;width:222px;height:1px;background:#eeeeee"></div>
<div class="a" style="left:2674px;top:207px;width:88px;height:37px;background:#ff5722;border-radius:3px"></div>
<svg style="left:2689px;top:218px" width="14" height="15" viewBox="0 0 14 15"><path d="M1 3 H13 M5 3 V1 H9 V3 M2.5 3 L3.5 14 H10.5 L11.5 3 M5.5 6 V11 M8.5 6 V11" stroke="#fff" stroke-width="1.3" fill="none"/></svg>
<div class="t" style="left:2708px;top:218px;font-size:20px;color:#fff">删除</div>
<div class="a" style="left:2677px;top:756px;width:12px;height:2px;background:#5a9ae0"></div>
<div class="a" style="left:2691px;top:756px;width:22px;height:2px;background:#5a9ae0"></div>
<div class="a" style="left:2715px;top:756px;width:5px;height:2px;background:#5a9ae0"></div>
<div class="a" style="left:2722px;top:756px;width:36px;height:2px;background:#5a9ae0"></div>
</div>
<div class="a" style="left:2590px;top:311px;width:16px;height:66px;background:linear-gradient(90deg,rgba(0,0,0,0),rgba(0,0,0,0.05))"></div>
<div class="a" style="left:2606px;top:311px;width:222px;height:67px;background:#fff;border-bottom:1px solid #eeeeee"></div>
<div class="a" style="left:2828px;top:310px;width:1px;height:67px;background:#eeeeee"></div>
<div class="t" style="left:2693px;top:334px;font-size:24px;font-weight:bold;color:#111">操作</div>
<div class="a" style="left:2829px;top:377px;width:26px;height:759px;background:#f1f1f1"></div>
<div class="a" style="left:2831px;top:406px;width:24px;height:402px;background:#c1c1c1"></div>
<svg style="left:2835px;top:389px" width="14" height="8" viewBox="0 0 14 8"><path d="M0 8 L7 0 L14 8 Z" fill="#a3a3a3"/></svg>
<svg style="left:2836px;top:1117px" width="14" height="8" viewBox="0 0 14 8"><path d="M0 0 L7 8 L14 0 Z" fill="#505050"/></svg>
<div class="a" style="left:600px;top:1136px;width:2228px;height:26px;background:#f1f1f1"></div>
<div class="a" style="left:600px;top:1137px;width:1463px;height:24px;background:#c1c1c1"></div>
<svg style="left:2811px;top:1142px" width="8" height="14" viewBox="0 0 8 14"><path d="M0 0 L8 7 L0 14 Z" fill="#505050"/></svg>
<div class="a" style="left:2829px;top:1136px;width:26px;height:26px;background:#dcdcdc"></div>
<div class="a" style="left:826px;top:1162px;width:1px;height:68px;background:#eeeeee"></div>
<div class="a" style="left:1167px;top:1162px;width:1px;height:68px;background:#eeeeee"></div>
<div class="a" style="left:1389px;top:1162px;width:1px;height:68px;background:#eeeeee"></div>
<div class="a" style="left:1568px;top:1162px;width:1px;height:68px;background:#eeeeee"></div>
<div class="a" style="left:1825px;top:1162px;width:1px;height:68px;background:#eeeeee"></div>
<div class="a" style="left:2004px;top:1162px;width:1px;height:68px;background:#eeeeee"></div>
<div class="a" style="left:2226px;top:1162px;width:1px;height:68px;background:#eeeeee"></div>
<div class="a" style="left:2448px;top:1162px;width:1px;height:68px;background:#eeeeee"></div>
<div class="a" style="left:2628px;top:1162px;width:1px;height:68px;background:#eeeeee"></div>
<div class="a" style="left:2807px;top:1162px;width:1px;height:68px;background:#eeeeee"></div>
<div class="a" style="left:600px;top:1229px;width:2257px;height:1px;background:#eeeeee"></div>
<div class="t" style="left:1900px;width:299px;text-align:right;top:1184px;font-size:24px;color:#222">￥152,823.07</div>
<div class="a" style="left:700px;top:1244px;width:129px;height:44px;border:1px solid #eee;border-radius:3px;background:#fff"></div>
<div class="t" style="left:771px;top:1255px;font-size:21px;color:#333">确定</div>
<div class="t" style="left:847px;top:1255px;font-size:21px;color:#555">共 43 条</div>
<div class="a" style="left:939px;top:1244px;width:123px;height:44px;border:1px solid #eee;border-radius:3px;background:#fff"></div>
<div class="t" style="left:952px;top:1255px;font-size:21px;color:#222">20 条/页</div>
<svg style="left:1041px;top:1261px" width="13" height="8" viewBox="0 0 13 8"><path d="M1 1 L6.5 6.5 L12 1" stroke="#333" stroke-width="2" fill="none"/></svg>
<div class="a" style="left:254px;top:155px;width:542px;height:1330px;background:#fff;box-shadow:2px 0 14px rgba(0,0,0,0.12)"></div>
<svg style="left:271px;top:193.7px" width="26" height="26" viewBox="0 0 26 26"><rect x="1" y="1" width="24" height="24" rx="4" stroke="#009688" stroke-width="1.8" fill="none"/><path d="M1 7 H25" stroke="#009688" stroke-width="1.4"/><path d="M8 9 L13 14 L18 9 M13 14 V22 M8 15 H18 M8 19 H18" stroke="#009688" stroke-width="1.6" fill="none"/></svg>
<div class="t" style="left:305px;top:193.7px;font-size:27px;font-weight:bold;color:#009688">财务管理</div>
<div class="t" style="left:294px;top:259.7px;font-size:24px;color:#222">日记账</div>
<div class="t" style="left:529px;top:259.7px;font-size:24px;color:#222">运费管理</div>
<svg style="left:271px;top:334.6px" width="26" height="26" viewBox="0 0 26 26"><path d="M12 1 L22 6.5 V17.5 L12 23 L2 17.5 V6.5 Z M5 9 L12 13 L19 9 M12 13 V20" stroke="#009688" stroke-width="1.6" fill="none"/></svg>
<div class="t" style="left:305px;top:334.6px;font-size:27px;font-weight:bold;color:#009688">对账管理</div>
<div class="t" style="left:294px;top:400.6px;font-size:24px;color:#222">账期管理</div>
<div class="t" style="left:529px;top:400.6px;font-size:24px;color:#222">销售对账</div>
<div class="t" style="left:294px;top:464.6px;font-size:24px;color:#222">采购对账</div>
<div class="t" style="left:529px;top:464.6px;font-size:24px;color:#222">委外待对账</div>
<div class="t" style="left:294px;top:528.6px;font-size:24px;color:#222">委外对账单</div>
<svg style="left:271px;top:603.5px" width="26" height="26" viewBox="0 0 26 26"><path d="M12 1 L22 6.5 V17.5 L12 23 L2 17.5 V6.5 Z M5 9 L12 13 L19 9 M12 13 V20" stroke="#009688" stroke-width="1.6" fill="none"/></svg>
<div class="t" style="left:305px;top:603.5px;font-size:27px;font-weight:bold;color:#009688">收付款管理</div>
<div class="a" style="left:271px;top:649.5px;width:184px;height:65px;background:#c9eae6;border-left:5px solid #009688"></div>
<div class="t" style="left:294px;top:669.5px;font-size:24px;color:#009688">收款管理</div>
<div class="t" style="left:529px;top:669.5px;font-size:24px;color:#222">付款管理</div>
<div class="t" style="left:294px;top:733.5px;font-size:24px;color:#222">委外付款</div>
<div class="t" style="left:529px;top:733.5px;font-size:24px;color:#222">预收款管理</div>
<div class="t" style="left:294px;top:797.5px;font-size:24px;color:#222">预付款管理</div>
<svg style="left:271px;top:873.5px" width="26" height="26" viewBox="0 0 26 26"><path d="M12 1 L22 6.5 V17.5 L12 23 L2 17.5 V6.5 Z M5 9 L12 13 L19 9 M12 13 V20" stroke="#009688" stroke-width="1.6" fill="none"/></svg>
<div class="t" style="left:305px;top:873.5px;font-size:27px;font-weight:bold;color:#009688">发票管理</div>
<div class="t" style="left:294px;top:939.5px;font-size:24px;color:#222">发票申请</div>
<div class="t" style="left:529px;top:939.5px;font-size:24px;color:#222">已开发票</div>
<div class="t" style="left:294px;top:1003.5px;font-size:24px;color:#222">已收发票</div>
<svg style="left:271px;top:1078.0px" width="26" height="26" viewBox="0 0 26 26"><g transform="translate(3,0)"><circle cx="9" cy="6" r="5.5" fill="#009688"/><path d="M0 22 C0 14 4 11.5 9 11.5 C14 11.5 18 14 18 22 Z" fill="#009688"/><circle cx="20" cy="7" r="4.8" fill="#009688"/><path d="M16 12 C21 11 28 14 28 22 H19 C19 17 18 14 16 12 Z" fill="#009688"/></g></svg>
<div class="t" style="left:305px;top:1078.0px;font-size:27px;font-weight:bold;color:#009688">固定资产</div>
<div class="t" style="left:294px;top:1144.0px;font-size:24px;color:#222">资产管理</div>
<div class="t" style="left:529px;top:1144.0px;font-size:24px;color:#222">资产折旧</div>
<div class="t" style="left:294px;top:1208.0px;font-size:24px;color:#222">资产类别</div>
<div class="t" style="left:529px;top:1208.0px;font-size:24px;color:#222">存储位置</div>
<svg style="left:271px;top:1282.7px" width="26" height="26" viewBox="0 0 26 26"><path d="M12 1 L22 6.5 V17.5 L12 23 L2 17.5 V6.5 Z M5 9 L12 13 L19 9 M12 13 V20" stroke="#009688" stroke-width="1.6" fill="none"/></svg>
<div class="t" style="left:305px;top:1282.7px;font-size:27px;font-weight:bold;color:#009688">其他业务</div>
<div class="t" style="left:294px;top:1348.7px;font-size:24px;color:#222">佣金管理</div>
<div class="t" style="left:529px;top:1348.7px;font-size:24px;color:#222">业务工资</div>
<div class="t" style="left:294px;top:1412.7px;font-size:24px;color:#222">基础资料</div>
<div class="a" style="left:0;top:1484px;width:2880px;height:1px;background:#2a2d35"></div>
</body></html>
